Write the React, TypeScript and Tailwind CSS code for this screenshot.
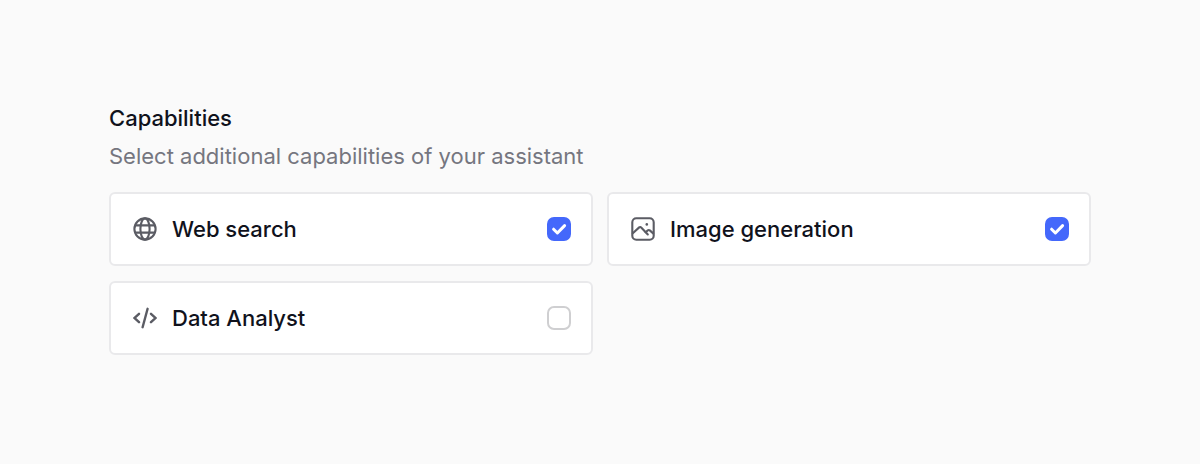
import { useState } from "react";
import type { ReactNode } from "react";

const iconClass = "size-6 shrink-0 text-[#5b5c64]";

function GlobeIcon() {
  return (
    <svg viewBox="0 0 24 24" fill="none" stroke="currentColor" strokeWidth="2.1" className={iconClass} aria-hidden="true">
      <circle cx="12" cy="12" r="10.6" />
      <ellipse cx="12" cy="12" rx="4.6" ry="10.6" />
      <path d="M2.2 8.4h19.6M2.2 15.6h19.6" />
    </svg>
  );
}

function ImageIcon() {
  return (
    <svg
      viewBox="0 0 24 24"
      fill="none"
      stroke="currentColor"
      strokeWidth="2.1"
      strokeLinecap="round"
      strokeLinejoin="round"
      className={iconClass}
      aria-hidden="true"
    >
      <rect x="1.3" y="1.3" width="21.4" height="21.4" rx="4" />
      <path d="M1.8 16.2l6.4-5.8a1.4 1.4 0 0 1 2 .1l6.6 7" />
      <path d="M14.6 15.2l2.2-1.8a1.6 1.6 0 0 1 2 0l3.4 3" />
      <circle cx="15.8" cy="7.4" r="1.3" fill="currentColor" stroke="none" />
    </svg>
  );
}

function CodeIcon() {
  return (
    <svg
      viewBox="0 0 24 24"
      fill="none"
      stroke="currentColor"
      strokeWidth="2.4"
      strokeLinecap="round"
      className={iconClass}
      aria-hidden="true"
    >
      <path d="M6 7.8L1.6 12L6 16.2M18 7.8L22.4 12L18 16.2M14.6 2.8L9.6 21.2" />
    </svg>
  );
}

const capabilities: { id: string; title: string; icon: ReactNode; enabled: boolean }[] = [
  { id: "web-search", title: "Web search", icon: <GlobeIcon />, enabled: true },
  { id: "image-generation", title: "Image generation", icon: <ImageIcon />, enabled: true },
  { id: "data-analyst", title: "Data Analyst", icon: <CodeIcon />, enabled: false },
];

export default function App() {
  const [selected, setSelected] = useState(capabilities.filter((c) => c.enabled).map((c) => c.id));

  const toggle = (id: string) =>
    setSelected((prev) => (prev.includes(id) ? prev.filter((item) => item !== id) : [...prev, id]));

  return (
    <main className="min-h-screen bg-[#fafafa] px-[109px] pt-[102px] pb-24 font-['Inter',sans-serif] text-[22px] leading-8 text-[#10121c]">
      <h2 className="font-medium">Capabilities</h2>
      <p className="mt-1.5 text-[#75767f]">Select additional capabilities of your assistant</p>

      <div className="mt-5 grid grid-cols-2 gap-x-3.5 gap-y-[15px]">
        {capabilities.map((capability) => (
          <label
            key={capability.id}
            htmlFor={capability.id}
            className="flex cursor-pointer items-center rounded-md border-2 border-[#e9e9eb] bg-white py-[19px] pr-5 pl-[22px]"
          >
            {capability.icon}
            <span className="ml-[15px] flex-1 font-medium">{capability.title}</span>
            <span className="relative size-6 shrink-0">
              <input
                id={capability.id}
                type="checkbox"
                checked={selected.includes(capability.id)}
                onChange={() => toggle(capability.id)}
                className="peer block size-6 cursor-pointer appearance-none rounded-[7px] border-2 border-[#cfcfd1] bg-white checked:border-[#4468fb] checked:bg-[#4468fb]"
              />
              <svg
                viewBox="0 0 24 24"
                fill="none"
                stroke="currentColor"
                strokeWidth="3"
                strokeLinecap="round"
                strokeLinejoin="round"
                className="pointer-events-none absolute inset-0 hidden size-6 text-white peer-checked:block"
                aria-hidden="true"
              >
                <path d="M6.6 12.2l3.8 3.8L17.6 8.6" />
              </svg>
            </span>
          </label>
        ))}
      </div>
    </main>
  );
}
